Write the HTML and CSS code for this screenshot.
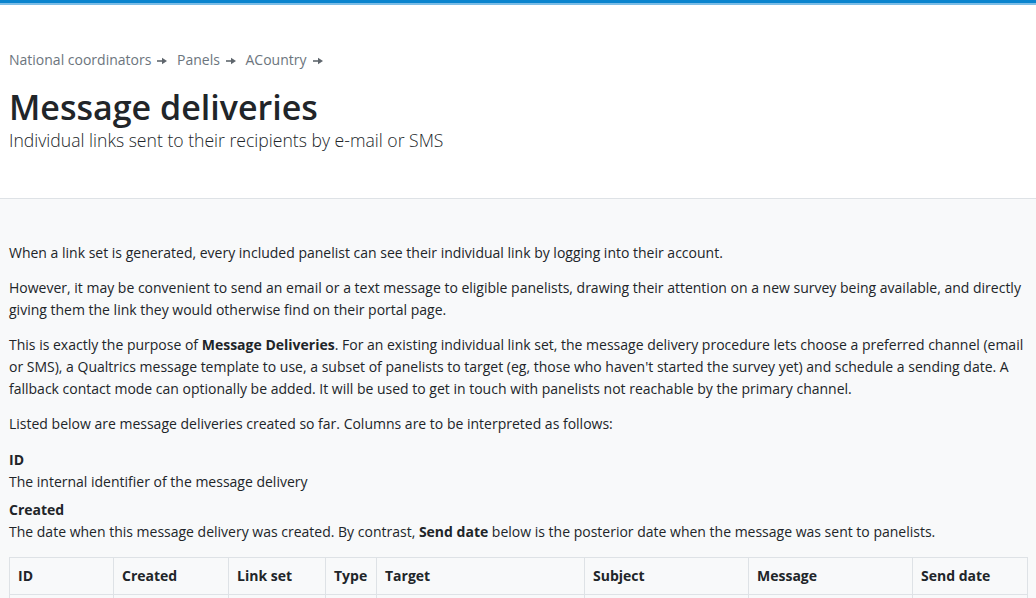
FILE: index.html
```html
<!DOCTYPE html>
<html lang="en">
<head>
<meta charset="utf-8">
<title>Message deliveries</title>
<link rel="stylesheet" href="styles.css">
</head>
<body>
<div class="topbar"></div>
<header class="page-header">
  <nav class="crumbs">
    <a href="#">National coordinators</a><svg class="sep" width="10" height="8" viewBox="0 0 10 8"><path d="M0 4H6" stroke="currentColor" stroke-width="1.6"/><path d="M5 0.8L10 4L5 7.2Z" fill="currentColor"/></svg>
    <a href="#">Panels</a><svg class="sep" width="10" height="8" viewBox="0 0 10 8"><path d="M0 4H6" stroke="currentColor" stroke-width="1.6"/><path d="M5 0.8L10 4L5 7.2Z" fill="currentColor"/></svg>
    <a href="#">ACountry</a><svg class="sep" width="10" height="8" viewBox="0 0 10 8"><path d="M0 4H6" stroke="currentColor" stroke-width="1.6"/><path d="M5 0.8L10 4L5 7.2Z" fill="currentColor"/></svg>
  </nav>
  <h1 class="title">Message deliveries</h1>
  <p class="lead">Individual links sent to their recipients by e-mail or SMS</p>
</header>
<main class="content">
  <p>When a link set is generated, every included panelist can see their individual link by logging into their account.</p>
  <p>However, it may be convenient to send an email or a text message to eligible panelists, drawing their attention on a new survey being available, and directly giving them the link they would otherwise find on their portal page.</p>
  <p>This is exactly the purpose of <strong>Message Deliveries</strong>. For an existing individual link set, the message delivery procedure lets choose a preferred channel (email or SMS), a Qualtrics message template to use, a subset of panelists to target (eg, those who haven't started the survey yet) and schedule a sending date. A fallback contact mode can optionally be added. It will be used to get in touch with panelists not reachable by the primary channel.</p>
  <p>Listed below are message deliveries created so far. Columns are to be interpreted as follows:</p>
  <dl class="defs">
    <dt>ID</dt>
    <dd>The internal identifier of the message delivery</dd>
    <dt>Created</dt>
    <dd>The date when this message delivery was created. By contrast, <strong>Send date</strong> below is the posterior date when the message was sent to panelists.</dd>
  </dl>
  <table class="grid">
    <colgroup>
      <col class="c-id">
      <col class="c-created">
      <col class="c-linkset">
      <col class="c-type">
      <col class="c-target">
      <col class="c-subject">
      <col class="c-message">
      <col class="c-send">
    </colgroup>
    <thead>
      <tr>
        <th>ID</th>
        <th>Created</th>
        <th>Link set</th>
        <th>Type</th>
        <th>Target</th>
        <th>Subject</th>
        <th>Message</th>
        <th>Send date</th>
      </tr>
    </thead>
    <tbody>
      <tr>
        <td>12</td>
        <td>2023-04-02</td>
        <td>Wave 3</td>
        <td>email</td>
        <td>Not started</td>
        <td>New survey available</td>
        <td>Reminder template</td>
        <td>2023-04-05</td>
      </tr>
    </tbody>
  </table>
</main>
</body>
</html>
```

FILE: styles.css
```css
html, body {
  margin: 0;
  padding: 0;
}
body {
  font-family: "Open Sans", "Noto Sans", "DejaVu Sans", sans-serif;
  font-size: 14px;
  line-height: 22px;
  color: #212529;
  background: #f8f9fa;
}
.topbar {
  height: 3px;
  background: #0a84ce;
  border-bottom: 2px solid #7dbde6;
}
.page-header {
  background: #ffffff;
  border-bottom: 1px solid #dee2e6;
  padding: 44px 9px 46px;
}
.crumbs {
  color: #6c757d;
  line-height: 22px;
}
.crumbs a {
  color: #6c757d;
  text-decoration: none;
}
.crumbs .sep {
  margin: 0 6px 0 6px;
  color: #5f666d;
  vertical-align: 0px;
}
.title {
  margin: 14px 0 0;
  font-size: 34px;
  line-height: 44px;
  font-weight: 600;
}
.lead {
  margin: -1px 0 0;
  font-size: 17.6px;
  line-height: 24px;
  font-weight: 300;
}
.content {
  padding: 43px 9px 0;
}
.content p {
  margin: 0 0 13px;
}
.defs {
  margin: 14px 0 14px;
}
.defs dt {
  font-weight: 700;
}
.defs dd {
  margin: 0 0 6px;
}
.grid {
  border-collapse: collapse;
  table-layout: fixed;
  width: 1018px;
}
.grid th, .grid td {
  border: 1px solid #dee2e6;
  padding: 7px 8px;
  text-align: left;
  white-space: nowrap;
  overflow: hidden;
}
.grid th {
  font-weight: 700;
}
.c-id { width: 104px; }
.c-created { width: 115px; }
.c-linkset { width: 97px; }
.c-type { width: 51px; }
.c-target { width: 208px; }
.c-subject { width: 164px; }
.c-message { width: 164px; }
.c-send { width: 115px; }
```
